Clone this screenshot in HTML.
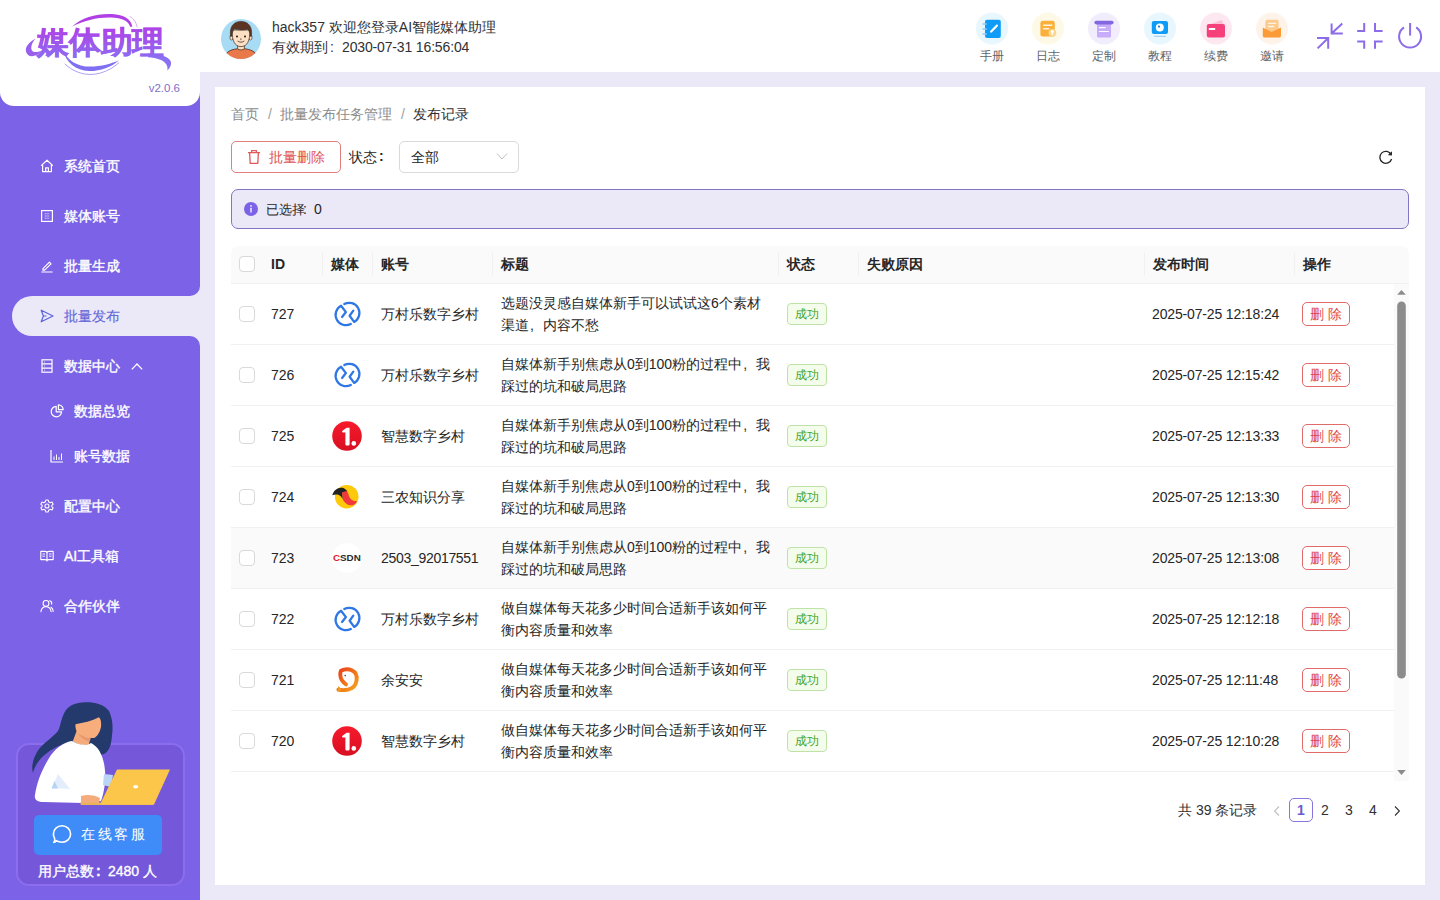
<!DOCTYPE html>
<html><head><meta charset="utf-8">
<style>
*{box-sizing:border-box;margin:0;padding:0}
html,body{width:1440px;height:900px;overflow:hidden}
body{font-family:"Liberation Sans",sans-serif;font-size:14px;color:#303133;background:#ebe8f8;position:relative}
.abs{position:absolute}
svg{display:block}
#header{left:0;top:0;width:1440px;height:72px;background:#fff}
#sideTop{left:0;top:0;width:200px;height:296px;background:#7c62e6;border-bottom-right-radius:10px}
#sideMid{left:0;top:290px;width:40px;height:52px;background:#7c62e6}
#sideBot{left:0;top:336px;width:200px;height:564px;background:#7c62e6;border-top-right-radius:10px}
#pill{left:12px;top:296px;width:200px;height:40px;background:#ebe8f8;border-radius:20px 0 0 20px}
#logobox{left:0;top:0;width:200px;height:106px;background:#fff;border-radius:0 0 14px 14px}
#card{left:215px;top:87px;width:1210px;height:798px;background:#fff}
.menu{position:absolute;left:0;width:200px;height:20px;color:#fff;font-size:14px;font-weight:normal;-webkit-text-stroke:0.35px currentColor;line-height:20px;white-space:nowrap}
.menu svg{position:absolute;left:40px;top:3px;width:14px;height:14px}
.menu span{position:absolute;left:64px;top:0}
.menu.sub svg{left:50px}
.menu.sub span{left:74px}
.tl{top:46.5px;width:48px;text-align:center;font-size:12px;line-height:18px;color:#606266}
.cb{width:16px;height:16px;border:1px solid #d9d9d9;border-radius:4px;background:#fff}
.th{font-size:14px;line-height:20px;font-weight:bold;color:#262626;white-space:nowrap}
.td{font-size:14px;line-height:20px;color:#262626;white-space:nowrap}
.dt{letter-spacing:-0.15px}
.tag{width:40px;height:22px;border:1px solid #bfe3a6;background:#f4fcec;color:#45a424;font-size:12px;line-height:20px;text-align:center;border-radius:4px}
.delb{width:48px;height:24px;border:1px solid #e06b6b;background:#fff;color:#e04848;font-size:14px;line-height:22px;text-align:center;border-radius:5px;white-space:nowrap}
.pg{top:800px;width:24px;text-align:center;font-size:14px;line-height:20px;color:#303133}
.menu.active{color:#6569d8;-webkit-text-stroke:0.15px #6569d8}
</style></head><body>
<svg width="0" height="0" style="position:absolute"><defs>
<linearGradient id="ydg" x1="0" y1="0" x2="0" y2="1"><stop offset="0" stop-color="#f71a2c"/><stop offset="1" stop-color="#d80f22"/></linearGradient>
<linearGradient id="yug" x1="0" y1="0" x2="1" y2="1"><stop offset="0" stop-color="#e8401c"/><stop offset="0.55" stop-color="#f07a1a"/><stop offset="1" stop-color="#f6a521"/></linearGradient>
<symbol id="i-wcl" viewBox="0 0 30 30"><g transform="translate(15.5 15) scale(0.92) translate(-14.7 -15)" fill="none" stroke="#2e77e5" stroke-width="2.45" stroke-linecap="round" stroke-linejoin="round"><path d="M11.2 4.2 A11 11 0 0 1 21.9 23.6 L17 16.9 L21 11.3"/><path d="M18.3 25.8 A11 11 0 0 1 7.7 6 L13 12.9 L8.8 18.2"/></g></symbol>
<symbol id="i-yd" viewBox="0 0 30 30"><circle cx="15" cy="15" r="14.8" fill="url(#ydg)"/><path d="M10.5 9.8 L14.6 6.8 L17.6 6.8 L17.6 23 C17.6 24 17 24.6 16 24.6 L15 24.6 C14 24.6 13.4 24 13.4 23 L13.4 11.4 L11 11.4 C10 11.4 9.8 10.4 10.5 9.8 Z" fill="#fff"/><circle cx="21.8" cy="22.4" r="2.3" fill="#fff"/></symbol>
<symbol id="i-sh" viewBox="0 0 30 30"><circle cx="14.7" cy="14.7" r="11.8" fill="#fec80b"/><path d="M9.9 10.6 C12 8.8 14.4 8.4 15.2 9.2 C16.4 12 17 14.4 17.9 15.9 C19.4 18.2 22 19.2 25 19.2 C24 21.4 22.4 22.8 20.2 23.2 C17.6 23.6 15.4 22.8 13.6 21 C12 19.6 11 18 10.8 17.2 Z" fill="#f0383e"/><path d="M0.3 13.2 C1.4 9.2 4.2 6.2 7.7 5.9 C10 5.6 12.4 6.2 13 7 C14 7.6 14.6 8.4 15.2 9.2 C13.6 9 11.6 9.6 9.9 10.6 C10 12.6 10.4 15.2 10.8 17.2 C9.6 15.4 8.4 13.6 6.3 12.8 C4.4 12.2 2 12.6 0.3 13.2 Z" fill="#222"/></symbol>
<symbol id="i-csdn" viewBox="0 0 30 30"><circle cx="15" cy="15" r="15" fill="#fff"/><text x="1" y="18.3" font-family="Liberation Sans" font-weight="bold" font-size="9.8" textLength="27.8" lengthAdjust="spacingAndGlyphs" fill="#2b2b2b"><tspan fill="#dd1a2a">C</tspan>SDN</text></symbol>
<symbol id="i-yu" viewBox="0 0 30 30"><path d="M14 19.4 C10.4 17 8.4 13.6 8.3 9.8 C8.2 7.6 8.6 6.4 9 5.8 C12 4.2 16.6 3.8 19.8 5.2 C23.6 7 25.2 11 24.6 15.2 C24 19.8 20.8 23.6 16 24.6 C13 25.2 9.4 25.2 6.4 24.6" fill="none" stroke="url(#yug)" stroke-width="3.9" stroke-linecap="round"/><path d="M5.2 26.8 L6.4 21 L9.6 24.4 L8 26.4 Z" fill="#f39a22"/><circle cx="13.2" cy="10.6" r="0.8" fill="#6b3a3a"/></symbol>
</defs></svg>
<div id="header" class="abs"></div>
<div id="sideTop" class="abs"></div>
<div id="sideMid" class="abs"></div>
<div id="sideBot" class="abs"></div>
<div id="pill" class="abs"></div>
<div id="logobox" class="abs"></div>
<div id="card" class="abs"></div>

<!-- logo -->
<svg class="abs" style="left:0;top:0" width="200" height="80" viewBox="0 0 200 80">
<defs>
<linearGradient id="lg1" x1="0" y1="0" x2="0" y2="1"><stop offset="0" stop-color="#b63ce4"/><stop offset="1" stop-color="#7f72f3"/></linearGradient>
<linearGradient id="lg1u" gradientUnits="userSpaceOnUse" x1="0" y1="24" x2="0" y2="60"><stop offset="0" stop-color="#b43de5"/><stop offset="1" stop-color="#8a6ef2"/></linearGradient>
</defs>
<path d="M35.5 38.5 C29 42 25 47 26 51.5 C27 56 31 57 35 55.6 C38 54.6 40.4 52.4 41.7 50.4 C38 52.2 33.6 53 32 50.6 C30.4 48 31.6 43 35.5 38.5 Z" fill="#9a5eee"/>
<path d="M72 26.6 C82 17 98 13.2 112 14 C124 14.8 131 19 132.4 26.8 L130.2 26.8 C128.4 21 121.6 18 111 17.6 C98 17.2 84 20.6 72 26.6 Z" fill="#b03fe6"/>
<path d="M129.6 16.4 C133.6 18.6 136.6 22.6 137.2 27.4" stroke="#cfa8f0" stroke-width="0.9" fill="none"/>
<path d="M63.3 50.4 C67 60 77 66.6 90 66.6 C101 66.6 112 63.4 119 60.2 C111 67.4 100 71.2 89 71 C76 70.6 65.6 62 63.3 50.4 Z" fill="#7f6ff3"/>
<path d="M64.8 63.8 C72 71 82 74.8 92 74.4 C102 74 112 69 119 62.6" stroke="#a894f4" stroke-width="0.9" fill="none"/>
<path d="M148 53.6 C158 54 168 56 170.6 61 C172 64 170 68 167.3 70.5 C168.2 66.6 166.6 62.6 161 60 C157 58.2 152 57.4 148 57.2 Z" fill="#8a70f2"/>
<text x="37" y="53.4" font-family="Liberation Sans" font-size="31" font-weight="bold" fill="url(#lg1u)" stroke="url(#lg1u)" stroke-width="0.5" textLength="127" lengthAdjust="spacingAndGlyphs">媒体助理</text>
</svg>
<div class="abs" style="left:140px;top:80px;width:40px;font-size:11.5px;line-height:16px;color:#7d70c8;text-align:right">v2.0.6</div>

<div class="menu" style="top:156px"><svg viewBox="0 0 14 14" fill="none" stroke="#fff" stroke-width="1.2" stroke-linejoin="round"><path d="M1.2 6.6 L7 1.2 L12.8 6.6 M2.6 5.6 V12.6 H11.4 V5.6 M5.6 12.6 V8.8 H8.4 V12.6"/></svg><span>系统首页</span></div>
<div class="menu" style="top:206px"><svg viewBox="0 0 14 14" fill="none" stroke="#fff" stroke-width="1.2"><rect x="1.6" y="1.6" width="10.8" height="10.8"/><path d="M4.8 4.8H9.2M4.8 7H9.2M4.8 9.2H9.2" stroke-width="0.9" stroke-dasharray="1 0.8"/></svg><span>媒体账号</span></div>
<div class="menu" style="top:256px"><svg viewBox="0 0 14 14" fill="none" stroke="#fff" stroke-width="1.2" stroke-linejoin="round"><path d="M3 9.6 L9.4 3.2 L11 4.8 L4.6 11.2 H3 Z M1.4 13 H12.6"/></svg><span>批量生成</span></div>
<div class="menu active" style="top:306px"><svg viewBox="0 0 14 14" fill="none" stroke="#5b62d8" stroke-width="1.2" stroke-linejoin="round"><path d="M1.2 1.2 L13 7 L1.2 12.8 L3.4 7 Z M3.4 7 H6.5"/></svg><span>批量发布</span></div>
<div class="menu" style="top:356px"><svg viewBox="0 0 14 14" fill="none" stroke="#fff" stroke-width="1.2"><rect x="2" y="0.8" width="10" height="12.4"/><path d="M2 4.9H12M2 9.1H12"/><path d="M4 2.9H5M4 7H5M4 11.1H5" stroke-width="0.8"/></svg><span>数据中心</span><svg style="left:131px;top:7px;width:12px;height:7px" viewBox="0 0 12 7" fill="none" stroke="#fff" stroke-width="1.3"><path d="M0.8 6.4 L6 1 L11.2 6.4"/></svg></div>
<div class="menu sub" style="top:401px"><svg viewBox="0 0 14 14" fill="none" stroke="#fff" stroke-width="1.2" stroke-linejoin="round"><path d="M6.2 2.4 A5.2 5.2 0 1 0 11.6 7.8 H6.2 Z"/><path d="M8.4 0.8 A5 5 0 0 1 13.2 5.6 H8.4 Z"/></svg><span>数据总览</span></div>
<div class="menu sub" style="top:446px"><svg viewBox="0 0 14 14" fill="none" stroke="#fff" stroke-width="1.2"><path d="M1 1V13H13"/><path d="M4 11V7.5M6.5 11V5.5M9 11V8M11.5 11V4.5" stroke-width="1"/></svg><span>账号数据</span></div>
<div class="menu" style="top:496px"><svg viewBox="0 0 14 14" fill="none" stroke="#fff" stroke-width="1.1" stroke-linejoin="round"><path d="M5.8 1 H8.2 L8.6 2.8 L10.2 3.7 L12 3.1 L13.2 5.2 L11.8 6.4 V7.6 L13.2 8.8 L12 10.9 L10.2 10.3 L8.6 11.2 L8.2 13 H5.8 L5.4 11.2 L3.8 10.3 L2 10.9 L0.8 8.8 L2.2 7.6 V6.4 L0.8 5.2 L2 3.1 L3.8 3.7 L5.4 2.8 Z"/><circle cx="7" cy="7" r="2"/></svg><span>配置中心</span></div>
<div class="menu" style="top:546px"><svg viewBox="0 0 14 14" fill="none" stroke="#fff" stroke-width="1.1" stroke-linejoin="round"><path d="M0.8 2.4 H5 C6 2.4 7 3 7 4 V12 C7 11 6 10.6 5 10.6 H0.8 Z M13.2 2.4 H9 C8 2.4 7 3 7 4 V12 C7 11 8 10.6 9 10.6 H13.2 Z"/><path d="M2.4 5H5M2.4 7.2H5M9 5H11.6M9 7.2H11.6" stroke-width="0.9"/></svg><span>AI工具箱</span></div>
<div class="menu" style="top:596px"><svg viewBox="0 0 14 14" fill="none" stroke="#fff" stroke-width="1.1" stroke-linecap="round"><circle cx="6" cy="4.4" r="2.9"/><path d="M0.9 12.8 C1.3 9.6 3.4 7.8 6 7.8 C8.6 7.8 10.7 9.6 11.1 12.8"/><path d="M9.6 1.8 C11.2 2.2 12 3.6 11.6 5.2 M11 8.2 C12.4 9 13.1 10.6 13.2 12.4"/></svg><span>合作伙伴</span></div>

<!-- bottom card -->
<div class="abs" style="left:16px;top:743px;width:169px;height:143px;border-radius:13px;background:#7558da;border:2px solid #8a6eee"></div>
<svg class="abs" style="left:25px;top:695px" width="150" height="120" viewBox="0 0 150 120">
<path d="M57 7.5 C66 6.5 78 8 84 16 C88 24 88 34 87 40 C86.5 48 85 55 80 58.5 C77 60 73 60 70 59 L62 52 L46 48 C38 48 30 52 22 58 C15 63 10 70 8 78 C6 72 8 62 14 54 C20 47 28 42 33 36 C36 30 36 22 41 15 C45 10 51 8 57 7.5 Z" fill="#253a6c"/>
<path d="M52 35 L47.7 46.4 C52 49 58 50.5 63.6 49.9 L66.5 39 Z" fill="#f5ac7c"/><path d="M52.6 37.6 C57 41.5 62 43.5 65.6 43.4 L64.8 46.6 C60 45.8 55.4 42.6 52.6 37.6 Z" fill="#e9976a"/><path d="M50.5 29.2 C58 28 67 26 73.9 22.3 C76 24 76.5 28 76 32 C75 37 72 42 69 43 C66 43.5 63 42 61 41 L53.2 38.8 C51 36 50 32 50.5 29.2 Z" fill="#f7ad7c"/>

<path d="M47 46 C40 47 32 52 26 60 C18 72 12 86 10 100 C9 104 12 107 18 107 L58 108 L76 106 C79 98 81 86 80 76 C79 62 74 52 66 48 L62 50 C58 50 52 49 47 46 Z" fill="#ffffff"/>
<path d="M27 93 L33 79 L45 94 Z" fill="#e3edfb"/>
<path d="M26.5 93.5 L29.5 86 L33 93.5 Z" fill="#b5d3f5"/>
<path d="M79 79 L88 80 L86 92 L78 90 Z" fill="#b9d6f7"/>
<path d="M56 101 C62 99 70 100 75 103 L74 108 L56 108 Z" fill="#f5ac7c"/>
<path d="M55 107.5 L129 108 L128.5 110 L56 110 Z" fill="#e8b45a"/>
<path d="M92 74.5 L145 74.5 L129 109.5 L75 109.5 Z" fill="#fbc649"/>
<ellipse cx="110.7" cy="91.7" rx="2.6" ry="1.7" fill="#fff"/>
</svg>
<div class="abs" style="left:34px;top:815px;width:128px;height:40px;background:#3f8cf9;border-radius:5px"></div>
<svg class="abs" style="left:52px;top:824px" width="20" height="20" viewBox="0 0 20 20" fill="none" stroke="#fff" stroke-width="1.6" stroke-linejoin="round"><path d="M4.2 16.6 C3.6 17.6 2.6 18.2 1.8 18.4 C3 16.6 3 15.4 2.6 14.4 C1.8 13 1.4 11.6 1.4 10 C1.4 5.4 5.2 1.8 10 1.8 C14.8 1.8 18.6 5.4 18.6 10 C18.6 14.6 14.8 18.2 10 18.2 C7.8 18.2 5.8 17.6 4.2 16.6 Z"/></svg>
<div class="abs" style="left:81px;top:824px;font-size:14px;line-height:20px;color:#fff;letter-spacing:2.7px;white-space:nowrap">在线客服</div>
<div class="abs" style="left:38px;top:861px;font-size:14px;line-height:20px;color:#fff;white-space:nowrap;-webkit-text-stroke:0.35px #fff">用户总数<span style="display:inline-block;width:14px;text-align:left;padding-left:2px;font-weight:bold">:</span>2480 人</div>


<!-- avatar -->
<svg class="abs" style="left:221px;top:19px" width="40" height="40" viewBox="0 0 40 40">
<defs><clipPath id="avc"><circle cx="20" cy="20" r="20"/></clipPath></defs>
<circle cx="20" cy="20" r="20" fill="#a8dbf4"/>
<g clip-path="url(#avc)">
<path d="M2.5 41 C3.5 33 10 29.6 20 29.6 C30 29.6 36.5 33 37.5 41 Z" fill="#e9794a" stroke="#3b2a20" stroke-width="0.7"/>
</g>
<path d="M16.6 25.5 V29.6 C17.6 31.4 22.4 31.4 23.4 29.6 V25.5 Z" fill="#fcdcc0" stroke="#3b2a20" stroke-width="0.7"/>
<ellipse cx="10.6" cy="18.4" rx="1.7" ry="2.6" fill="#fcdcc0" stroke="#3b2a20" stroke-width="0.6"/>
<ellipse cx="29.4" cy="18.4" rx="1.7" ry="2.6" fill="#fcdcc0" stroke="#3b2a20" stroke-width="0.6"/>
<path d="M11 11 C11 22 13.8 27.6 20 27.6 C26.2 27.6 29 22 29 11 Z" fill="#fde0c4" stroke="#3b2a20" stroke-width="0.7"/>
<path d="M9.6 17.4 C8.2 8 12.4 2.4 20 2.4 C27.6 2.4 31.8 8 30.4 17.4 L29.2 17.2 C29 13.8 28.2 11.6 26.6 10.2 C22.4 11.4 16.6 11.2 13.4 9.8 C12 11.4 11.2 13.6 10.8 17.2 Z" fill="#5c3423" stroke="#3b2a20" stroke-width="0.6"/>
<circle cx="16" cy="17.4" r="1" fill="#2a1a12"/>
<circle cx="24" cy="17.4" r="1" fill="#2a1a12"/>
<path d="M17 22.2 C18.6 23.6 21.4 23.6 23 22.2" stroke="#3b2a20" stroke-width="0.75" fill="none" stroke-linecap="round"/>
<path d="M20 19 L19.5 20.6 L20.6 20.6" stroke="#3b2a20" stroke-width="0.5" fill="none"/>
</svg>
<div class="abs" style="left:272px;top:17px;font-size:14px;line-height:20px;color:#303133;white-space:nowrap">hack357 欢迎您登录AI智能媒体助理</div>
<div class="abs" style="left:272px;top:37px;font-size:14px;line-height:20px;color:#303133;white-space:nowrap">有效期到<span style="display:inline-block;width:14px;padding-left:2px">:</span><span style="letter-spacing:-0.15px">2030-07-31 16:56:04</span></div>

<!-- tool icons -->
<svg class="abs" style="left:974px;top:10px" width="36" height="36" viewBox="0 0 36 36">
<circle cx="18" cy="18.4" r="16" fill="#e8f6fe"/>
<rect x="11" y="9.8" width="15.8" height="18.2" rx="2" fill="#0f9cf7"/>
<path d="M8.6 14H12.8M8.6 19H12.8M8.6 24H12.8" stroke="#86cdfb" stroke-width="1.5"/>
<path d="M17.2 21.6 L23 15.6" stroke="#fff" stroke-width="2.2" stroke-linecap="round"/>
</svg>
<svg class="abs" style="left:1030px;top:10px" width="36" height="36" viewBox="0 0 36 36">
<circle cx="18" cy="18.4" r="16" fill="#fef9e7"/>
<rect x="10.4" y="10.8" width="14.4" height="15.8" rx="2.4" fill="#fbb03a"/>
<path d="M13.6 15.2H21.8M13.6 18.7H18.6" stroke="#fff4dc" stroke-width="1.5" stroke-linecap="round"/>
<circle cx="22.4" cy="22.8" r="3.9" fill="#fcd68a"/>
<path d="M22.4 21 V25" stroke="#fff" stroke-width="1.3"/><circle cx="22.4" cy="21.5" r="1.5" fill="#fff"/>
</svg>
<svg class="abs" style="left:1086px;top:10px" width="36" height="36" viewBox="0 0 36 36">
<circle cx="18" cy="18.4" r="16" fill="#f1edfd"/>
<rect x="11" y="12.6" width="14" height="15" rx="1.6" fill="#c6acfa"/>
<rect x="8.4" y="10.8" width="19.2" height="3.6" rx="1.8" fill="#8367e0"/>
<path d="M13.4 17.6H19.2M13.4 21.5H22.4" stroke="#fff" stroke-width="1.2" stroke-linecap="round"/>
</svg>
<svg class="abs" style="left:1142px;top:10px" width="36" height="36" viewBox="0 0 36 36">
<circle cx="18" cy="18.4" r="16" fill="#e8f7fe"/>
<rect x="9.8" y="11" width="16.2" height="13" rx="2" fill="#0f9cf7"/>
<circle cx="17.8" cy="17.4" r="4" fill="#fff"/>
<circle cx="17" cy="16.6" r="1.05" fill="#0f7fd0"/>
<rect x="12" y="25.8" width="12" height="1.2" rx="0.6" fill="#a8d2f0"/>
</svg>
<svg class="abs" style="left:1198px;top:10px" width="36" height="36" viewBox="0 0 36 36">
<circle cx="18" cy="18.4" r="16" fill="#fde8f1"/>
<path d="M12 14.2 L22.6 10.2 C23.4 10 23.8 10.2 24.2 10.8 L25.6 14.2 Z" fill="#fbbfd6"/>
<rect x="8.8" y="14" width="18.2" height="13.6" rx="2" fill="#f5407c"/>
<rect x="10.8" y="18" width="6.4" height="2" fill="#fff"/>
</svg>
<svg class="abs" style="left:1254px;top:10px" width="36" height="36" viewBox="0 0 36 36">
<circle cx="18" cy="18.4" r="16" fill="#fef3e8"/>
<rect x="11.4" y="9.8" width="13.2" height="13" rx="2" fill="#fbca8c"/>
<path d="M14.4 13.3H21.8M14.4 16.5H19.8" stroke="#fff3e0" stroke-width="1.3" stroke-linecap="round"/>
<path d="M8.8 17.4 L17.6 22 L27 17.4 V25.8 C27 26.8 26.2 27.6 25.2 27.6 H10.6 C9.6 27.6 8.8 26.8 8.8 25.8 Z" fill="#fb9b38"/>
</svg>
<div class="abs tl" style="left:968px">手册</div>
<div class="abs tl" style="left:1024px">日志</div>
<div class="abs tl" style="left:1080px">定制</div>
<div class="abs tl" style="left:1136px">教程</div>
<div class="abs tl" style="left:1192px">续费</div>
<div class="abs tl" style="left:1248px">邀请</div>

<svg class="abs" style="left:1312px;top:18px" width="36" height="36" viewBox="1312 18 36 36" fill="none" stroke="#8c6ce8" stroke-width="2">
<path d="M1331.6 23.4 V33.6 H1342.8 M1331.6 33.6 L1342.3 23.6"/>
<path d="M1317 38 H1328.2 V48.8 M1328.2 38 L1317.6 48.4"/>
</svg>
<svg class="abs" style="left:1352px;top:18px" width="36" height="36" viewBox="1352 18 36 36" fill="none" stroke="#8c6ce8" stroke-width="2">
<path d="M1364.2 23 V31 H1357.2 M1375 23 V31 H1382.6 M1357.2 41.4 H1364.2 V48.8 M1382.6 41.4 H1375 V48.8"/>
</svg>
<svg class="abs" style="left:1394px;top:18px" width="32" height="36" viewBox="1394 18 32 36" fill="none" stroke="#8c6ce8" stroke-width="2">
<path d="M1410.1 23 V35.6"/>
<path d="M1404 27.4 A11 11 0 1 0 1416.2 27.4"/>
</svg>


<div class="abs" style="left:231px;top:104px;font-size:14px;line-height:20px;color:#8c8c8c;white-space:nowrap">首页<span style="margin:0 8px 0 9px;color:#a0a0a0">/</span>批量发布任务管理<span style="margin:0 8px 0 9px;color:#a0a0a0">/</span><span style="color:#303133">发布记录</span></div>
<div class="abs" style="left:231px;top:141px;width:110px;height:32px;border:1px solid #e07f7f;border-radius:5px"></div>
<svg class="abs" style="left:247px;top:149px" width="14" height="16" viewBox="0 0 14 16" fill="none" stroke="#e05a5a" stroke-width="1.3" stroke-linejoin="round"><path d="M1 3.6 H13 M4.6 3.6 V1.6 H9.4 V3.6 M2.6 3.6 L3.2 14.4 H10.8 L11.4 3.6"/></svg>
<div class="abs" style="left:269px;top:147px;font-size:14px;line-height:20px;color:#e05555;white-space:nowrap">批量删除</div>
<div class="abs" style="left:349px;top:147px;font-size:14px;line-height:20px;color:#262626;white-space:nowrap">状态</div><div class="abs" style="left:379px;top:146px;font-size:14px;line-height:20px;color:#262626;font-weight:bold">:</div>
<div class="abs" style="left:399px;top:141px;width:120px;height:32px;border:1px solid #d9d9d9;border-radius:5px"></div>
<div class="abs" style="left:411px;top:147px;font-size:14px;line-height:20px;color:#262626;white-space:nowrap">全部</div>
<svg class="abs" style="left:496px;top:152px" width="12" height="9" viewBox="0 0 12 9" fill="none" stroke="#bfbfbf" stroke-width="1"><path d="M1 1.5 L6 7 L11 1.5"/></svg>
<svg class="abs" style="left:1378px;top:149px" width="16" height="16" viewBox="0 0 16 16" fill="none" stroke="#262626" stroke-width="1.3"><path d="M13.2 5.6 A6 6 0 1 0 13.6 10"/><path d="M13.8 2.4 V6.2 H10" stroke-width="0" fill="#262626"/><path d="M14 2.6 L13.6 6.4 L10.2 5.4 Z" fill="#262626" stroke="none"/></svg>
<div class="abs" style="left:231px;top:189px;width:1178px;height:40px;background:#ebe8f8;border:1px solid #8176c6;border-radius:7px"></div>
<svg class="abs" style="left:244px;top:202px" width="14" height="14" viewBox="0 0 14 14"><circle cx="7" cy="7" r="7" fill="#7c62e6"/><rect x="6.2" y="5.8" width="1.6" height="4.6" rx="0.5" fill="#e8e0ff"/><circle cx="7" cy="3.9" r="0.95" fill="#e8e0ff"/></svg>
<div class="abs" style="left:266px;top:200px;font-size:12.5px;line-height:20px;color:#262626;white-space:nowrap">已选择</div><div class="abs" style="left:303px;top:199px;font-size:14px;line-height:20px;color:#262626">:</div><div class="abs" style="left:314px;top:199px;font-size:14px;line-height:20px;color:#262626">0</div>

<!-- table header -->
<div class="abs" style="left:231px;top:246px;width:1178px;height:38px;background:#fafafa;border-radius:8px 8px 0 0;border-bottom:1px solid #f0f0f0"></div>

<div class="abs" style="left:322.0px;top:253px;width:1px;height:22px;background:#f0f0f0"></div>
<div class="abs" style="left:372.0px;top:253px;width:1px;height:22px;background:#f0f0f0"></div>
<div class="abs" style="left:492.0px;top:253px;width:1px;height:22px;background:#f0f0f0"></div>
<div class="abs" style="left:778.0px;top:253px;width:1px;height:22px;background:#f0f0f0"></div>
<div class="abs" style="left:858.0px;top:253px;width:1px;height:22px;background:#f0f0f0"></div>
<div class="abs" style="left:1144.0px;top:253px;width:1px;height:22px;background:#f0f0f0"></div>
<div class="abs" style="left:1294.0px;top:253px;width:1px;height:22px;background:#f0f0f0"></div>
<div class="abs cb" style="left:239px;top:256px"></div>
<div class="abs th" style="left:271px;top:254px">ID</div>
<div class="abs th" style="left:331px;top:254px">媒体</div>
<div class="abs th" style="left:381px;top:254px">账号</div>
<div class="abs th" style="left:501px;top:254px">标题</div>
<div class="abs th" style="left:787px;top:254px">状态</div>
<div class="abs th" style="left:867px;top:254px">失败原因</div>
<div class="abs th" style="left:1153px;top:254px">发布时间</div>
<div class="abs th" style="left:1303px;top:254px">操作</div>
<div class="abs" style="left:231px;top:344px;width:1163px;height:1px;background:#f0f0f0"></div>
<div class="abs cb" style="left:239px;top:306px"></div>
<div class="abs td" style="left:271px;top:304px">727</div>
<svg class="abs" style="left:332px;top:299px" width="30" height="30" viewBox="0 0 30 30"><use href="#i-wcl"/></svg>
<div class="abs td" style="left:381px;top:304px">万村乐数字乡村</div>
<div class="abs td" style="left:501px;top:293px;line-height:21.5px">选题没灵感自媒体新手可以试试这6个素材<br>渠道<span style="display:inline-block;width:14px;padding-left:1px">,</span>内容不愁</div>
<div class="abs tag" style="left:787px;top:303px">成功</div>
<div class="abs td dt" style="left:1152px;top:304px">2025-07-25 12:18:24</div>
<div class="abs delb" style="left:1302px;top:302px">删 除</div>
<div class="abs" style="left:231px;top:405px;width:1163px;height:1px;background:#f0f0f0"></div>
<div class="abs cb" style="left:239px;top:367px"></div>
<div class="abs td" style="left:271px;top:365px">726</div>
<svg class="abs" style="left:332px;top:360px" width="30" height="30" viewBox="0 0 30 30"><use href="#i-wcl"/></svg>
<div class="abs td" style="left:381px;top:365px">万村乐数字乡村</div>
<div class="abs td" style="left:501px;top:354px;line-height:21.5px">自媒体新手别焦虑从0到100粉的过程中<span style="display:inline-block;width:14px;padding-left:1px">,</span>我<br>踩过的坑和破局思路</div>
<div class="abs tag" style="left:787px;top:364px">成功</div>
<div class="abs td dt" style="left:1152px;top:365px">2025-07-25 12:15:42</div>
<div class="abs delb" style="left:1302px;top:363px">删 除</div>
<div class="abs" style="left:231px;top:466px;width:1163px;height:1px;background:#f0f0f0"></div>
<div class="abs cb" style="left:239px;top:428px"></div>
<div class="abs td" style="left:271px;top:426px">725</div>
<svg class="abs" style="left:332px;top:421px" width="30" height="30" viewBox="0 0 30 30"><use href="#i-yd"/></svg>
<div class="abs td" style="left:381px;top:426px">智慧数字乡村</div>
<div class="abs td" style="left:501px;top:415px;line-height:21.5px">自媒体新手别焦虑从0到100粉的过程中<span style="display:inline-block;width:14px;padding-left:1px">,</span>我<br>踩过的坑和破局思路</div>
<div class="abs tag" style="left:787px;top:425px">成功</div>
<div class="abs td dt" style="left:1152px;top:426px">2025-07-25 12:13:33</div>
<div class="abs delb" style="left:1302px;top:424px">删 除</div>
<div class="abs" style="left:231px;top:527px;width:1163px;height:1px;background:#f0f0f0"></div>
<div class="abs cb" style="left:239px;top:489px"></div>
<div class="abs td" style="left:271px;top:487px">724</div>
<svg class="abs" style="left:332px;top:482px" width="30" height="30" viewBox="0 0 30 30"><use href="#i-sh"/></svg>
<div class="abs td" style="left:381px;top:487px">三农知识分享</div>
<div class="abs td" style="left:501px;top:476px;line-height:21.5px">自媒体新手别焦虑从0到100粉的过程中<span style="display:inline-block;width:14px;padding-left:1px">,</span>我<br>踩过的坑和破局思路</div>
<div class="abs tag" style="left:787px;top:486px">成功</div>
<div class="abs td dt" style="left:1152px;top:487px">2025-07-25 12:13:30</div>
<div class="abs delb" style="left:1302px;top:485px">删 除</div>
<div class="abs" style="left:231px;top:528px;width:1163px;height:61px;background:#fafafa"></div>
<div class="abs" style="left:231px;top:588px;width:1163px;height:1px;background:#f0f0f0"></div>
<div class="abs cb" style="left:239px;top:550px"></div>
<div class="abs td" style="left:271px;top:548px">723</div>
<svg class="abs" style="left:332px;top:543px" width="30" height="30" viewBox="0 0 30 30"><use href="#i-csdn"/></svg>
<div class="abs td" style="left:381px;top:548px"><span style="letter-spacing:-0.3px">2503_92017551</span></div>
<div class="abs td" style="left:501px;top:537px;line-height:21.5px">自媒体新手别焦虑从0到100粉的过程中<span style="display:inline-block;width:14px;padding-left:1px">,</span>我<br>踩过的坑和破局思路</div>
<div class="abs tag" style="left:787px;top:547px">成功</div>
<div class="abs td dt" style="left:1152px;top:548px">2025-07-25 12:13:08</div>
<div class="abs delb" style="left:1302px;top:546px">删 除</div>
<div class="abs" style="left:231px;top:649px;width:1163px;height:1px;background:#f0f0f0"></div>
<div class="abs cb" style="left:239px;top:611px"></div>
<div class="abs td" style="left:271px;top:609px">722</div>
<svg class="abs" style="left:332px;top:604px" width="30" height="30" viewBox="0 0 30 30"><use href="#i-wcl"/></svg>
<div class="abs td" style="left:381px;top:609px">万村乐数字乡村</div>
<div class="abs td" style="left:501px;top:598px;line-height:21.5px">做自媒体每天花多少时间合适新手该如何平<br>衡内容质量和效率</div>
<div class="abs tag" style="left:787px;top:608px">成功</div>
<div class="abs td dt" style="left:1152px;top:609px">2025-07-25 12:12:18</div>
<div class="abs delb" style="left:1302px;top:607px">删 除</div>
<div class="abs" style="left:231px;top:710px;width:1163px;height:1px;background:#f0f0f0"></div>
<div class="abs cb" style="left:239px;top:672px"></div>
<div class="abs td" style="left:271px;top:670px">721</div>
<svg class="abs" style="left:332px;top:665px" width="30" height="30" viewBox="0 0 30 30"><use href="#i-yu"/></svg>
<div class="abs td" style="left:381px;top:670px">余安安</div>
<div class="abs td" style="left:501px;top:659px;line-height:21.5px">做自媒体每天花多少时间合适新手该如何平<br>衡内容质量和效率</div>
<div class="abs tag" style="left:787px;top:669px">成功</div>
<div class="abs td dt" style="left:1152px;top:670px">2025-07-25 12:11:48</div>
<div class="abs delb" style="left:1302px;top:668px">删 除</div>
<div class="abs" style="left:231px;top:771px;width:1163px;height:1px;background:#f0f0f0"></div>
<div class="abs cb" style="left:239px;top:733px"></div>
<div class="abs td" style="left:271px;top:731px">720</div>
<svg class="abs" style="left:332px;top:726px" width="30" height="30" viewBox="0 0 30 30"><use href="#i-yd"/></svg>
<div class="abs td" style="left:381px;top:731px">智慧数字乡村</div>
<div class="abs td" style="left:501px;top:720px;line-height:21.5px">做自媒体每天花多少时间合适新手该如何平<br>衡内容质量和效率</div>
<div class="abs tag" style="left:787px;top:730px">成功</div>
<div class="abs td dt" style="left:1152px;top:731px">2025-07-25 12:10:28</div>
<div class="abs delb" style="left:1302px;top:729px">删 除</div>

<div class="abs" style="left:1394px;top:284px;width:15px;height:497px;background:#fafafa"></div>
<svg class="abs" style="left:1394px;top:284px" width="15" height="497" viewBox="0 0 15 497"><path d="M3.2 10.8 L7.5 6 L11.8 10.8 Z" fill="#8c8c8c"/><path d="M3.2 486 L7.5 491 L11.8 486 Z" fill="#8c8c8c"/><rect x="3.2" y="17.5" width="8.6" height="377" rx="4.3" fill="#8c8c8c"/></svg>
<div class="abs" style="left:1178px;top:800px;font-size:14px;line-height:20px;color:#303133;white-space:nowrap">共 39 条记录</div>
<svg class="abs" style="left:1271px;top:805px" width="12" height="12" viewBox="0 0 12 12" fill="none" stroke="#c0c0c0" stroke-width="1.1"><path d="M8 1.5 L3.6 6 L8 10.5"/></svg>
<div class="abs" style="left:1289px;top:798px;width:24px;height:24px;border:1px solid #8876df;border-radius:5px;text-align:center;line-height:22px;color:#6a5ccc;font-size:14px;font-weight:bold">1</div>
<div class="abs pg" style="left:1313px">2</div>
<div class="abs pg" style="left:1337px">3</div>
<div class="abs pg" style="left:1361px">4</div>
<svg class="abs" style="left:1391px;top:805px" width="12" height="12" viewBox="0 0 12 12" fill="none" stroke="#303133" stroke-width="1.1"><path d="M4 1.5 L8.4 6 L4 10.5"/></svg>

</body></html>
